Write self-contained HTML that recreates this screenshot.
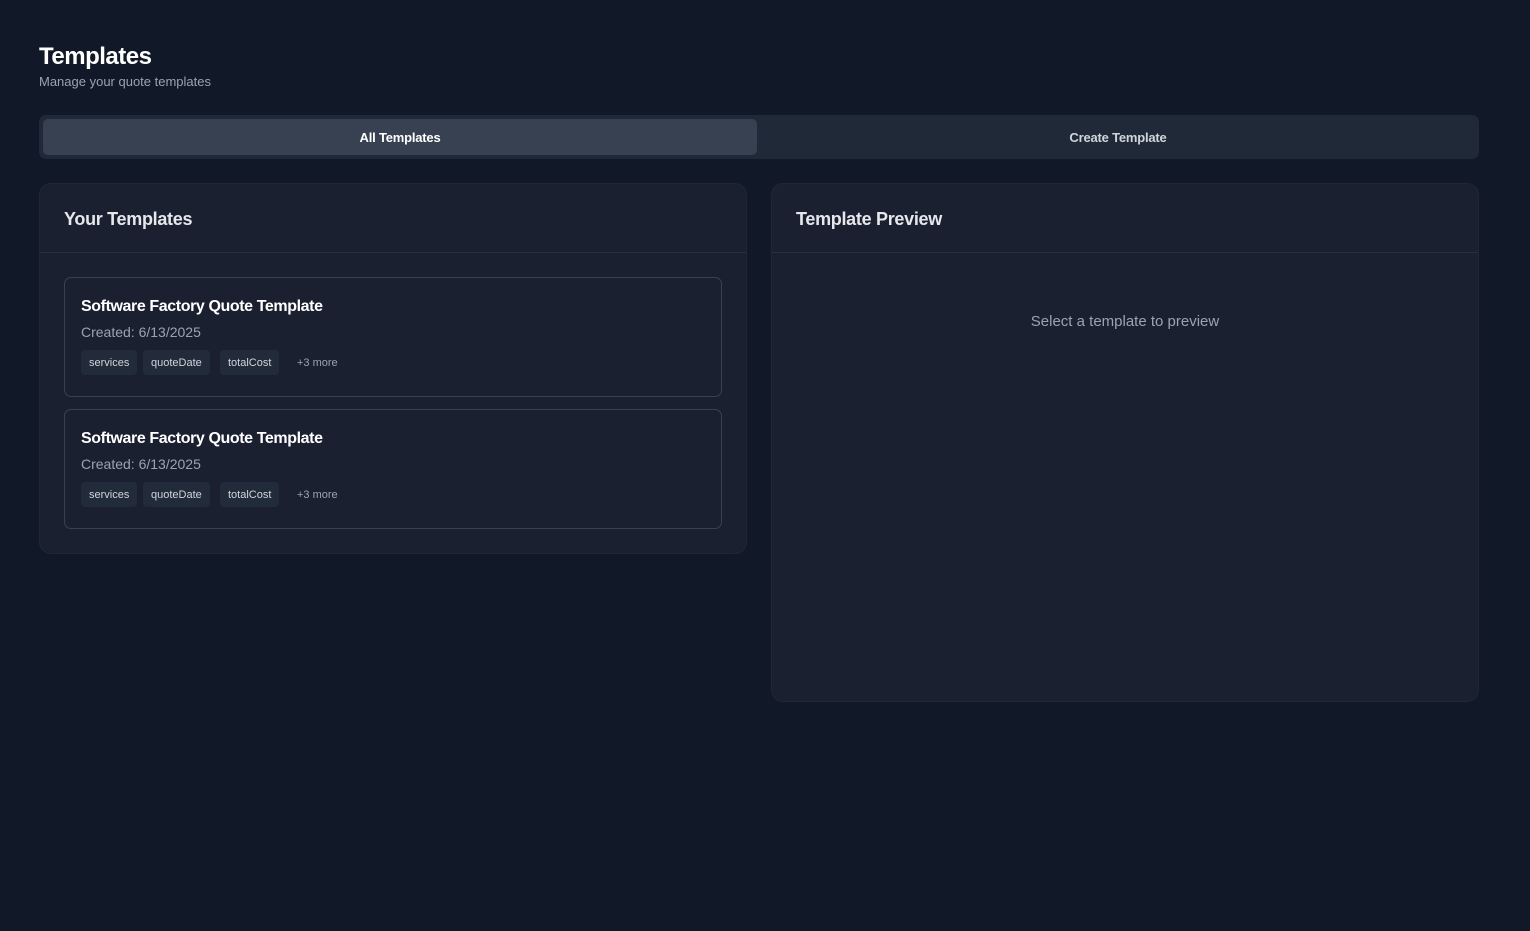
<!DOCTYPE html>
<html><head><style>
*{box-sizing:border-box;margin:0;padding:0}
body{width:1530px;height:931px;background:#111827;font-family:"Liberation Sans",sans-serif;color:#fff;position:relative;overflow:hidden}
.abs{position:absolute}
h1{position:absolute;left:39px;top:43px;font-size:24px;font-weight:bold;letter-spacing:-0.5px}
.sub{left:39px;top:74px;font-size:13px;color:#9ca3af}
.tabs{left:39px;top:115px;width:1440px;height:44px;background:#1f2937;border-radius:7px}
.tab1{left:43px;top:119px;width:714px;height:36px;background:#374151;border-radius:5px;font-size:13px;font-weight:bold;text-align:center;line-height:37px;letter-spacing:-0.2px}
.tab2{left:757px;top:119px;width:722px;height:36px;font-size:13px;color:#d1d5db;text-align:center;line-height:37px;font-weight:bold;letter-spacing:-0.2px}
.panel{background:#1a2030;border:1px solid #1f2737;border-radius:12px}
.ph{font-size:18px;font-weight:bold;color:#e5e7eb;letter-spacing:-0.3px}
.line{height:1px;background:#263040}
.card{left:64px;width:658px;height:120px;border:1px solid #374151;border-radius:7px}
.card .t{position:absolute;left:16px;top:20px;font-size:16px;font-weight:bold;letter-spacing:-0.4px}
.card .d{position:absolute;left:16px;top:46px;font-size:14px;color:#9ca3af}
.tag{position:absolute;top:72px;height:25px;background:#222b3a;border-radius:4px;font-size:11px;color:#d1d5db;line-height:27px;padding:0 8px}
.more{position:absolute;top:72px;left:232px;font-size:11px;color:#9ca3af;line-height:27px}
</style></head><body>
<h1>Templates</h1>
<div class="abs sub">Manage your quote templates</div>
<div class="abs tabs"></div>
<div class="abs tab1">All Templates</div>
<div class="abs tab2">Create Template</div>

<div class="abs panel" style="left:39px;top:183px;width:708px;height:371px"></div>
<div class="abs ph" style="left:64px;top:209px">Your Templates</div>
<div class="abs line" style="left:40px;top:252px;width:706px"></div>

<div class="abs card" style="top:277px">
<div class="t">Software Factory Quote Template</div><div class="d">Created: 6/13/2025</div>
<div class="tag" style="left:16px">services</div><div class="tag" style="left:78px">quoteDate</div><div class="tag" style="left:155px">totalCost</div><div class="more">+3 more</div></div>
<div class="abs card" style="top:409px">
<div class="t">Software Factory Quote Template</div><div class="d">Created: 6/13/2025</div>
<div class="tag" style="left:16px">services</div><div class="tag" style="left:78px">quoteDate</div><div class="tag" style="left:155px">totalCost</div><div class="more">+3 more</div></div>

<div class="abs panel" style="left:771px;top:183px;width:708px;height:519px"></div>
<div class="abs ph" style="left:796px;top:209px">Template Preview</div>
<div class="abs line" style="left:772px;top:252px;width:706px"></div>
<div class="abs" style="left:771px;width:708px;top:313px;text-align:center;font-size:15px;color:#9ca3af">Select a template to preview</div>
</body></html>
